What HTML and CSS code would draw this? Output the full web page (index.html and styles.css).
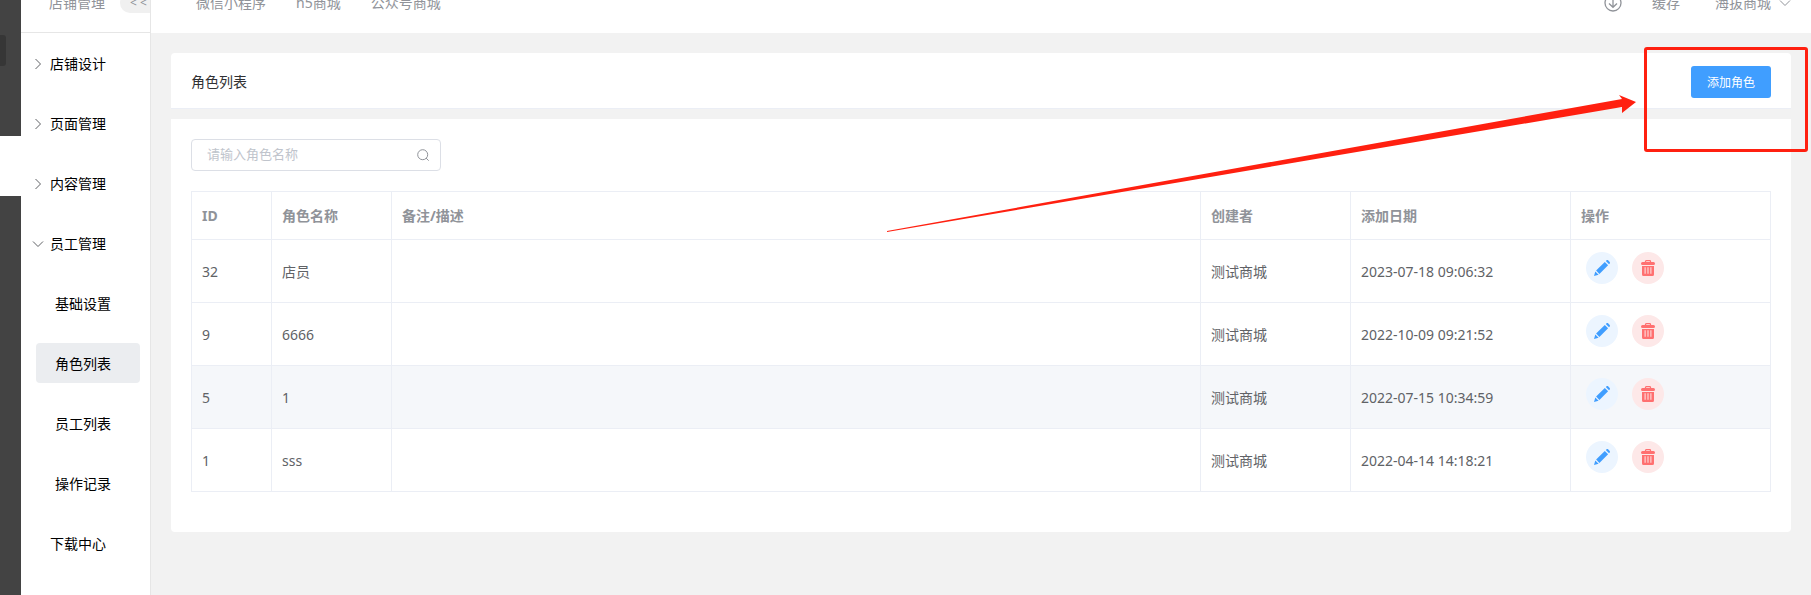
FILE: index.html
```html
<!DOCTYPE html>
<html lang="zh-CN">
<head>
  <meta charset="UTF-8">
  <title>角色列表</title>
  <link rel="stylesheet" href="styles.css">
</head>
<body>
  <svg class="symbols" aria-hidden="true">
    <symbol id="arrow-right" viewBox="0 0 12 12"><path d="M3.500 1l5 5-5 5" fill="none" stroke="currentColor"/></symbol>
    <symbol id="arrow-down" viewBox="0 0 12 12"><path d="M1 3.500l5 5 5-5" fill="none" stroke="currentColor"/></symbol>
    <symbol id="edit" viewBox="0 0 16 16">
      <path d="M10.800 1.900l3.300 3.300-8.700 8.700-3.300-3.300z M11.800 1l.8-.7c.5-.4 1-.4 1.500 0l1.600 1.600c.4.5.4 1 0 1.500l-.7.800z M1.300 11.400l3.300 3.300-4.600 1.300z" fill="currentColor"/>
    </symbol>
    <symbol id="delete" viewBox="0 0 16 16">
      <path d="M5.500 2.500V1.500q0-.8.800-.8h3.400q.8 0 .8.800v1" fill="none" stroke="currentColor" stroke-width="1.300"/>
      <rect x="1" y="2" width="14" height="3" rx="1.500" fill="currentColor"/>
      <path fill-rule="evenodd" d="M2 6h12v8.500q0 1.500-1.500 1.500h-9q-1.500 0-1.500-1.500z M4.600 7.200v6.500h1V7.200z M7.100 7.200v6.500h.5V7.200z M8.400 7.200v6.500h.5V7.200z M10.400 7.200v6.500h1V7.200z" fill="currentColor"/>
    </symbol>
  </svg>

  <div class="app">
    <div class="rail">
      <div class="rail-tag"></div>
      <div class="rail-active"></div>
    </div>

    <aside class="sidebar">
      <div class="sidebar-head">
        <span>店铺管理</span>
        <button class="collapse" type="button">&lt; &lt;</button>
      </div>
      <nav class="menu">
        <a class="menu-item" href="#"><svg><use href="#arrow-right"/></svg>店铺设计</a>
        <a class="menu-item" href="#"><svg><use href="#arrow-right"/></svg>页面管理</a>
        <a class="menu-item" href="#"><svg><use href="#arrow-right"/></svg>内容管理</a>
        <a class="menu-item" href="#"><svg><use href="#arrow-down"/></svg>员工管理</a>
        <a class="sub-item" href="#">基础设置</a>
        <a class="sub-item active" href="#">角色列表</a>
        <a class="sub-item" href="#">员工列表</a>
        <a class="sub-item" href="#">操作记录</a>
        <a class="menu-item plain" href="#">下载中心</a>
      </nav>
    </aside>

    <div class="main">
      <header class="topbar">
        <nav class="tabs">
          <a href="#">微信小程序</a>
          <a href="#">h5商城</a>
          <a href="#">公众号商城</a>
        </nav>
        <div class="tools">
          <a href="#" aria-label="下载">
            <svg class="download" viewBox="0 0 18 18" fill="none" stroke="currentColor" stroke-width="1.300">
              <circle cx="9" cy="9" r="8"/>
              <path d="M9 4v9M5 9.500l4 3.800 4-3.800"/>
            </svg>
          </a>
          <a class="cache" href="#">缓存</a>
          <a class="user" href="#">海拔商城 <svg><use href="#arrow-down"/></svg></a>
        </div>
      </header>

      <div class="content">
        <div class="card title-card">
          <span>角色列表</span>
          <button class="add" type="button">添加角色</button>
        </div>

        <div class="card list-card">
          <div class="search">
            <input type="text" placeholder="请输入角色名称" aria-label="角色名称">
            <svg viewBox="0 0 12 12" fill="none" stroke="currentColor"><circle cx="5.700" cy="5.700" r="5"/><path d="M9 9l2.700 2.700"/></svg>
          </div>

          <table>
            <colgroup>
              <col class="col-id"><col class="col-name"><col><col class="col-creator"><col class="col-date"><col class="col-action">
            </colgroup>
            <thead>
              <tr><th>ID</th><th>角色名称</th><th>备注/描述</th><th>创建者</th><th>添加日期</th><th>操作</th></tr>
            </thead>
            <tbody>
              <tr>
                <td>32</td><td>店员</td><td></td><td>测试商城</td><td>2023-07-18 09:06:32</td>
                <td class="actions">
                  <div>
                    <button class="edit" type="button" aria-label="编辑"><svg><use href="#edit"/></svg></button>
                    <button class="delete" type="button" aria-label="删除"><svg><use href="#delete"/></svg></button>
                  </div>
                </td>
              </tr>
              <tr>
                <td>9</td><td>6666</td><td></td><td>测试商城</td><td>2022-10-09 09:21:52</td>
                <td class="actions">
                  <div>
                    <button class="edit" type="button" aria-label="编辑"><svg><use href="#edit"/></svg></button>
                    <button class="delete" type="button" aria-label="删除"><svg><use href="#delete"/></svg></button>
                  </div>
                </td>
              </tr>
              <tr class="hover">
                <td>5</td><td>1</td><td></td><td>测试商城</td><td>2022-07-15 10:34:59</td>
                <td class="actions">
                  <div>
                    <button class="edit" type="button" aria-label="编辑"><svg><use href="#edit"/></svg></button>
                    <button class="delete" type="button" aria-label="删除"><svg><use href="#delete"/></svg></button>
                  </div>
                </td>
              </tr>
              <tr>
                <td>1</td><td>sss</td><td></td><td>测试商城</td><td>2022-04-14 14:18:21</td>
                <td class="actions">
                  <div>
                    <button class="edit" type="button" aria-label="编辑"><svg><use href="#edit"/></svg></button>
                    <button class="delete" type="button" aria-label="删除"><svg><use href="#delete"/></svg></button>
                  </div>
                </td>
              </tr>
            </tbody>
          </table>
        </div>
      </div>
    </div>

    <!-- guide marks over the add button -->
    <div class="mark-box"></div>
    <svg class="mark-arrow" viewBox="0 0 749 138" aria-hidden="true">
      <path d="M0 136L735 4l-3-4 17 7-14 11v-6L0 137z" fill="#ff2010"/>
    </svg>
  </div>
</body>
</html>
```
FILE: styles.css
```css
* {
  box-sizing: border-box;
}

body {
  margin: 0;
  overflow: hidden;
  background: #f2f2f2;
  font-family: "Noto Sans", "Noto Sans CJK SC", sans-serif;
  font-size: 14px;
  line-height: 20px;
  color: #303133;
}

a {
  color: inherit;
  text-decoration: none;
}

button {
  border: none;
  padding: 0;
  font-family: inherit;
  cursor: pointer;
}

svg {
  display: block;
  flex: none;
}

.symbols {
  display: none;
}

/* the page sits scrolled a little under the top edge */
.app {
  position: relative;
  display: flex;
  min-height: calc(100vh + 27px);
  margin-top: -27px;
}

/* left rail */
.rail {
  flex: none;
  width: 21px;
  padding-top: 62px;
  background: #434343;
}

.rail-tag {
  width: 6px;
  height: 31px;
  border-radius: 0 3px 3px 0;
  background: #363636;
}

.rail-active {
  height: 60px;
  margin-top: 70px;
  background: #fff;
}

/* sidebar */
.sidebar {
  flex: none;
  width: 130px;
  border-right: 1px solid #e6e6e6;
  background: #fff;
  color: #000;
  overflow: hidden;
}

.sidebar-head {
  display: flex;
  align-items: center;
  gap: 15px;
  height: 60px;
  padding-left: 28px;
  border-bottom: 1px solid #e6e6e6;
  color: #909399;
  white-space: nowrap;
}

.collapse {
  flex: none;
  width: 40px;
  height: 20px;
  padding-left: 10px;
  border-radius: 10px;
  background: #f0f0f0;
  color: #909399;
  font-size: 12px;
  text-align: left;
}

.menu {
  display: flow-root;
}

.menu-item {
  display: flex;
  align-items: center;
  gap: 6px;
  height: 60px;
  padding: 2px 0 0 11px;
}

.menu-item.plain {
  padding-left: 29px;
}

.menu-item svg {
  width: 12px;
  height: 12px;
  color: #606266;
}

.sub-item {
  display: block;
  margin: 10px 10px 10px 15px;
  padding: 11px 19px 9px;
  border-radius: 4px;
}

.sub-item + .sub-item {
  margin-top: 20px;
}

.sub-item.active {
  background: #ebedf0;
}

/* top bar */
.main {
  flex: 1;
  min-width: 0;
}

.topbar {
  display: flex;
  align-items: center;
  justify-content: space-between;
  height: 60px;
  padding: 0 20px 0 45px;
  background: #fff;
  color: #909399;
}

.tabs {
  display: flex;
  gap: 30px;
}

.tools {
  display: flex;
  align-items: center;
}

.download {
  width: 18px;
  height: 18px;
}

.cache {
  margin: 0 35px 0 30px;
}

.user {
  display: flex;
  align-items: center;
  gap: 8px;
}

.user svg {
  width: 12px;
  height: 12px;
}

/* content */
.content {
  padding: 20px;
}

.card {
  background: #fff;
}

.title-card {
  display: flex;
  align-items: center;
  justify-content: space-between;
  margin-bottom: 10px;
  padding: 13px 20px 10px;
  border-bottom: 1px solid #ebeef5;
  border-radius: 4px 4px 0 0;
}

.add {
  width: 80px;
  height: 32px;
  border-radius: 3px;
  background: #409eff;
  color: #fff;
  font-size: 12px;
}

.list-card {
  padding: 20px 20px 40px;
  border-radius: 0 0 4px 4px;
}

.search {
  display: flex;
  align-items: center;
  width: 250px;
  height: 32px;
  margin-bottom: 20px;
  padding: 0 11px 0 15px;
  border: 1px solid #dcdfe6;
  border-radius: 4px;
}

.search input {
  flex: 1;
  min-width: 0;
  padding: 0 0 2px;
  border: none;
  outline: none;
  font-family: inherit;
  font-size: 13px;
}

.search input::placeholder {
  color: #c0c4cc;
}

.search svg {
  width: 12px;
  height: 12px;
  color: #909399;
}

/* table */
table {
  width: 100%;
  table-layout: fixed;
  border-collapse: separate;
  border-spacing: 0;
  border-top: 1px solid #ebeef5;
  border-left: 1px solid #ebeef5;
  color: #606266;
}

.col-id {
  width: 80px;
}

.col-name {
  width: 120px;
}

.col-creator {
  width: 150px;
}

.col-date {
  width: 220px;
}

.col-action {
  width: 200px;
}

th,
td {
  height: 63px;
  padding: 2px 10px 0;
  border-right: 1px solid #ebeef5;
  border-bottom: 1px solid #ebeef5;
  text-align: left;
}

th {
  height: 48px;
  padding-top: 0;
  color: #909399;
}

tr.hover td {
  background: #f5f7fa;
}

td.actions {
  padding: 12px 15px 18px;
}

.actions div {
  display: flex;
  gap: 14px;
}

.actions button {
  display: flex;
  align-items: center;
  justify-content: center;
  width: 32px;
  height: 32px;
  border-radius: 50%;
}

.actions svg {
  width: 16px;
  height: 16px;
}

.edit {
  background: #ecf5ff;
  color: #409eff;
}

.delete {
  background: #fde8e8;
  color: #ff7070;
}

/* guide marks */
.mark-box {
  position: absolute;
  top: 74px;
  right: 3px;
  width: 164px;
  height: 105px;
  border: 3px solid #ff2010;
  border-radius: 3px;
}

.mark-arrow {
  position: absolute;
  top: 122px;
  right: 175px;
  width: 749px;
  height: 138px;
  pointer-events: none;
}
```
